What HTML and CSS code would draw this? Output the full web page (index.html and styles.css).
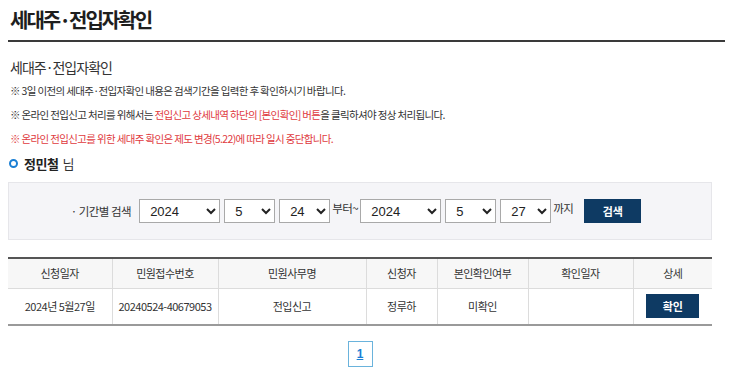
FILE: index.html
```html
<!DOCTYPE html>
<html>
<head>
    <title>세대주·전입자확인</title>
    <meta http-equiv="Content-Type" content="text/html;charset=utf-8"/>
    <link rel="stylesheet" href="styles.css">
</head>
<body>
<div class="page">
    <h1 class="page_title">세대주·전입자확인</h1>

    <div class="content">
        <h2 class="sub_title">세대주·전입자확인</h2>
        <p class="note">※ 3일 이전의 세대주·전입자확인 내용은 검색기간을 입력한 후 확인하시기 바랍니다.</p>
        <p class="note">※ 온라인 전입신고 처리를 위해서는 <span class="red">전입신고 상세내역 하단의 [본인확인] 버튼</span>을 클릭하셔야 정상 처리됩니다.</p>
        <p class="note red">※ 온라인 전입신고를 위한 세대주 확인은 제도 변경(5.22)에 따라 일시 중단합니다.</p>
        <div class="user"><span class="dot"></span><b>정민철</b> 님</div>

        <div class="search_box">
            <span class="lbl">· 기간별 검색</span>
            <select class="sel_y"><option>2024</option></select>
            <select class="sel_m"><option>5</option></select>
            <select class="sel_m"><option>24</option></select>
            <span class="txt">부터~</span>
            <select class="sel_y"><option>2024</option></select>
            <select class="sel_m"><option>5</option></select>
            <select class="sel_m"><option>27</option></select>
            <span class="txt">까지</span>
            <button class="btn btn_search" type="button">검색</button>
        </div>

        <table class="list">
            <colgroup>
                <col style="width:104px">
                <col style="width:106px">
                <col style="width:148px">
                <col style="width:71px">
                <col style="width:91px">
                <col style="width:105px">
                <col>
            </colgroup>
            <thead>
            <tr>
                <th>신청일자</th>
                <th>민원접수번호</th>
                <th>민원사무명</th>
                <th>신청자</th>
                <th>본인확인여부</th>
                <th>확인일자</th>
                <th>상세</th>
            </tr>
            </thead>
            <tbody>
            <tr>
                <td>2024년 5월27일</td>
                <td>20240524-40679053</td>
                <td>전입신고</td>
                <td>정루하</td>
                <td>미확인</td>
                <td></td>
                <td><button class="btn btn_ok" type="button">확인</button></td>
            </tr>
            </tbody>
        </table>

        <div class="paging"><a href="#" class="on">1</a></div>
    </div>
</div>
</body>
</html>
```

FILE: styles.css
```css
*{box-sizing: border-box}
body {
    margin: 0;
    padding: 0;
    background: #fff;
    color: #333;
    font-family: "Noto Sans CJK KR", "Noto Sans", sans-serif;
    font-size: 12px;
}
.page{
    width: 732px;
    padding: 0 7px 0 8px;
}
.page_title{
    margin: 0;
    padding: 6px 2px;
    font-size: 20px;
    line-height: 28px;
    font-weight: bold;
    letter-spacing: -2px;
    color: #1e1e1e;
    border-bottom: 2px solid #3a3a3a;
}
.content{
    width: 704px;
}
.sub_title{
    margin: 15px 0 2px;
    padding-left: 2px;
    font-size: 14px;
    line-height: 20px;
    font-weight: normal;
    letter-spacing: -1px;
    color: #333;
}
.note{
    margin: 0;
    padding-left: 2px;
    font-size: 10.5px;
    line-height: 24px;
    letter-spacing: -0.65px;
    color: #333;
}
.red{color: #e03a3e;}

.user{
    display: flex;
    align-items: center;
    height: 24px;
    font-size: 13px;
    letter-spacing: -0.5px;
    color: #333;
}
.user b{margin-right: 4px; color: #222;}
.user .dot{
    width: 9px;
    height: 9px;
    margin: 0 6px 0 1px;
    border: 2.5px solid #1a7fd4;
    border-radius: 50%;
}

.search_box{
    display: flex;
    align-items: center;
    justify-content: center;
    height: 58px;
    margin-top: 7px;
    padding-right: 8px;
    background: #f5f5f8;
    border: 1px solid #e6e6ea;
}
.search_box .lbl{
    margin-right: 8px;
    font-size: 11.5px;
    letter-spacing: -0.5px;
}
.search_box select{
    height: 24px;
    margin-right: 4px;
    padding: 0 4px 0 6px;
    border: 1px solid #a9a9a9;
    border-radius: 0;
    background: #fff;
    font-family: "Liberation Sans", Arial, sans-serif;
    font-size: 13px;
    color: #222;
}
.sel_y{width: 81px;}
.sel_m{width: 51px;}
.search_box .txt{
    margin: -6px 2px 0 -2px;
    font-size: 11.5px;
    letter-spacing: -0.5px;
}
.btn{
    border: 0;
    background: #0e3a63;
    color: #fff;
    font-family: "Noto Sans CJK KR", sans-serif;
    font-weight: bold;
    font-size: 11px;
    cursor: pointer;
}
.btn_search{
    width: 57px;
    height: 24px;
    margin-left: 9px;
}

.list{
    width: 704px;
    margin-top: 17px;
    border-collapse: collapse;
    border-top: 2px solid #555;
    border-bottom: 2px solid #9a9a9a;
    table-layout: fixed;
    font-size: 11px;
    letter-spacing: -0.5px;
}
.list th,.list td{
    text-align: center;
    border-left: 1px solid #dcdcdc;
    padding: 0;
    color: #333;
}
.list th:first-child,.list td:first-child{border-left: 0;}
.list th{
    height: 30px;
    font-weight: normal;
    background: #f7f7f7;
    border-bottom: 1px solid #dcdcdc;
}
.list td{height: 37px;}
.btn_ok{
    width: 53px;
    height: 24px;
    font-size: 11px;
}

.paging{
    display: flex;
    justify-content: center;
    margin-top: 15px;
}
.paging a{
    display: block;
    width: 25px;
    height: 26px;
    line-height: 24px;
    text-align: center;
    border: 1px solid #6ab3dc;
    font-family: "Liberation Sans", Arial, sans-serif;
    font-weight: bold;
    font-size: 12px;
    color: #1a7fd4;
}
```
